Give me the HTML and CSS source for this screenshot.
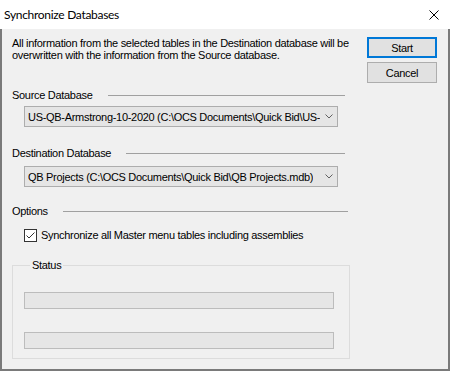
FILE: index.html
```html
<!DOCTYPE html>
<html lang="en">
<head>
    <meta charset="UTF-8">
    <title>Synchronize Databases</title>
    <link rel="stylesheet" href="styles.css">
</head>
<body>
    <div class="window">
        <div class="titlebar">
            <span class="title">Synchronize Databases</span>
            <span class="close">
                <svg width="10" height="10" viewBox="0 0 10 10">
                    <path d="M0.5 0.5 L9.5 9.5 M9.5 0.5 L0.5 9.5" stroke="#000" stroke-width="1" fill="none"/>
                </svg>
            </span>
        </div>
        <div class="client">
            <div class="main">
                <p class="intro">All information from the selected tables in the Destination database will be<br>overwritten with the information from the Source database.</p>

                <div class="section-head source-head"><span>Source Database</span></div>
                <div class="combo">
                    <span class="combo-text">US-QB-Armstrong-10-2020 (C:\OCS Documents\Quick Bid\US-</span>
                    <svg class="chevron" width="8" height="5" viewBox="0 0 8 5">
                        <path d="M0.5 0.5 L4 4 L7.5 0.5" stroke="#606060" stroke-width="1" fill="none"/>
                    </svg>
                </div>

                <div class="section-head dest-head"><span>Destination Database</span></div>
                <div class="combo dest-combo">
                    <span class="combo-text">QB Projects (C:\OCS Documents\Quick Bid\QB Projects.mdb)</span>
                    <svg class="chevron" width="8" height="5" viewBox="0 0 8 5">
                        <path d="M0.5 0.5 L4 4 L7.5 0.5" stroke="#606060" stroke-width="1" fill="none"/>
                    </svg>
                </div>

                <div class="section-head options-head"><span>Options</span></div>
                <label class="check-row">
                    <span class="checkbox">
                        <svg width="11" height="11" viewBox="0 0 11 11">
                            <path d="M1.5 5.5 L4 8 L9.5 2.5" stroke="#333" stroke-width="1" fill="none"/>
                        </svg>
                    </span>
                    Synchronize all Master menu tables including assemblies
                </label>

                <fieldset class="status">
                    <legend>Status</legend>
                    <div class="bar"></div>
                    <div class="bar second"></div>
                </fieldset>
            </div>

            <div class="buttons">
                <button class="btn default">Start</button>
                <button class="btn">Cancel</button>
            </div>
        </div>
    </div>
</body>
</html>
```

FILE: styles.css
```css
body {
    margin: 0;
    background-color: #f0f0f0;
}
.window {
    width: 450px;
    height: 371px;
    display: flex;
    flex-direction: column;
    font-family: 'Liberation Sans', Arial, sans-serif;
    font-size: 11px;
    letter-spacing: -0.3px;
    color: #000;
}
.titlebar {
    height: 29px;
    flex-shrink: 0;
    background-color: #fff;
    display: flex;
    align-items: center;
    justify-content: space-between;
    padding: 0 11px 0 4px;
}
.title {
    font-family: 'Lato', sans-serif;
    font-size: 12px;
    letter-spacing: -0.3px;
}
.close svg {
    display: block;
}
.client {
    flex: 1;
    background-color: #f0f0f0;
    border: 2px solid #7a7a7a;
    border-top: 0;
    display: flex;
    gap: 17px;
    padding: 8px 0 0 10px;
}
.main {
    width: 338px;
}
.intro {
    margin: 0;
    line-height: 12px;
    white-space: nowrap;
}
.section-head {
    display: flex;
    align-items: center;
    gap: 15px;
    line-height: 12px;
    margin-right: 5px;
}
.section-head::after {
    content: '';
    flex: 1;
    border-top: 1px solid #a0a0a0;
}
.source-head {
    margin-top: 28px;
}
.dest-head {
    margin-top: 20px;
}
.options-head {
    margin-top: 18px;
    margin-right: 2px;
}
.combo {
    margin: 5px 0 0 12px;
    width: 314px;
    height: 21px;
    box-sizing: border-box;
    border: 1px solid #adadad;
    background-color: #e5e5e5;
    display: flex;
    align-items: center;
    justify-content: space-between;
    padding: 0 4px 0 3px;
}
.dest-combo {
    margin-top: 7px;
}
.combo-text {
    white-space: nowrap;
    overflow: hidden;
}
.chevron {
    flex-shrink: 0;
    margin-left: 4px;
}
.check-row {
    display: flex;
    align-items: center;
    gap: 4px;
    margin: 12px 0 0 12px;
    line-height: 13px;
}
.checkbox {
    width: 13px;
    height: 13px;
    box-sizing: border-box;
    border: 1px solid #333;
    background-color: #fff;
    display: flex;
    align-items: center;
    justify-content: center;
}
.checkbox svg {
    display: block;
}
.status {
    margin: 17px 0 0 0;
    padding: 0 15px 9px 11px;
    border: 1px solid #dcdcdc;
    min-width: 0;
}
.status legend {
    margin-left: 6px;
    padding: 0 2px;
    line-height: 12px;
}
.bar {
    height: 17px;
    box-sizing: border-box;
    border: 1px solid #bcbcbc;
    background-color: #e6e6e6;
    margin-top: 21px;
}
.bar.second {
    margin-top: 23px;
}
.buttons {
    display: flex;
    flex-direction: column;
    gap: 4px;
}
.btn {
    width: 70px;
    height: 21px;
    box-sizing: border-box;
    border: 1px solid #adadad;
    background-color: #e1e1e1;
    font-family: 'Liberation Sans', Arial, sans-serif;
    font-size: 11px;
    letter-spacing: -0.3px;
    color: #000;
    padding: 0;
}
.btn.default {
    border: 2px solid #0078d7;
}
```
